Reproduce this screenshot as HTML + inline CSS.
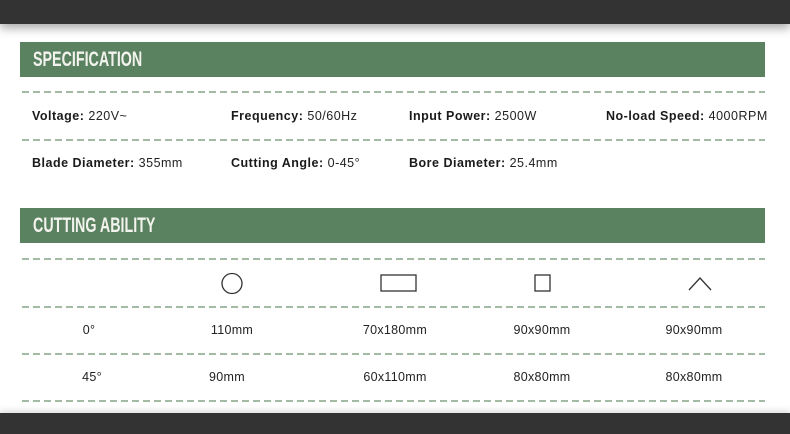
<!DOCTYPE html>
<html><head><style>
body{margin:0;width:790px;height:434px;background:#fff;position:relative;overflow:hidden;font-family:"Liberation Sans",sans-serif;}
.top{position:absolute;left:0;top:0;width:790px;height:24px;background:#333;box-shadow:0 4px 10px rgba(0,0,0,.35);}
.bot{position:absolute;left:0;top:413px;width:790px;height:21px;background:#333;box-shadow:0 -2px 6px rgba(0,0,0,.15);}
.bar{position:absolute;left:20px;width:745px;height:35px;background:#5a8160;}
.bar span{position:absolute;left:13px;top:6px;color:#f3f3ee;font-weight:bold;font-size:21px;transform:scaleX(.68);transform-origin:left;}
.dash{position:absolute;left:22px;width:743px;height:2px;background:repeating-linear-gradient(90deg,#a3bba4 0 7px,transparent 7px 11px);}
.t{position:absolute;font-size:12.5px;color:#222;white-space:nowrap;letter-spacing:0.5px;}
.t b{color:#1a1a1a}
.c{position:absolute;font-size:12.5px;color:#222;transform:translateX(-50%);white-space:nowrap;letter-spacing:0.3px;}
</style></head><body>
<div class="top"></div>
<div class="bar" style="top:42px"><span>SPECIFICATION</span></div>
<div class="dash" style="top:91px"></div>
<div class="t" style="left:32px;top:109px"><b>Voltage:</b> 220V~</div>
<div class="t" style="left:231px;top:109px"><b>Frequency:</b> 50/60Hz</div>
<div class="t" style="left:409px;top:109px"><b>Input Power:</b> 2500W</div>
<div class="t" style="left:606px;top:109px"><b>No-load Speed:</b> 4000RPM</div>
<div class="dash" style="top:139px"></div>
<div class="t" style="left:32px;top:156px"><b>Blade Diameter:</b> 355mm</div>
<div class="t" style="left:231px;top:156px"><b>Cutting Angle:</b> 0-45°</div>
<div class="t" style="left:409px;top:156px"><b>Bore Diameter:</b> 25.4mm</div>
<div class="bar" style="top:208px"><span>CUTTING ABILITY</span></div>
<div class="dash" style="top:258px"></div>
<svg style="position:absolute;left:0;top:270px" width="790" height="30">
<ellipse cx="232" cy="13.5" rx="10" ry="10" fill="none" stroke="#333" stroke-width="1.3"/>
<rect x="381" y="5" width="35" height="16" fill="none" stroke="#333" stroke-width="1.3"/>
<rect x="535" y="5" width="15" height="16" fill="none" stroke="#333" stroke-width="1.3"/>
<polyline points="689,20 700,8 711,20" fill="none" stroke="#333" stroke-width="1.3"/>
</svg>
<div class="dash" style="top:306px"></div>
<div class="c" style="left:89px;top:323px">0°</div>
<div class="c" style="left:232px;top:323px">110mm</div>
<div class="c" style="left:395px;top:323px">70x180mm</div>
<div class="c" style="left:542px;top:323px">90x90mm</div>
<div class="c" style="left:694px;top:323px">90x90mm</div>
<div class="dash" style="top:353px"></div>
<div class="c" style="left:92px;top:370px">45°</div>
<div class="c" style="left:227px;top:370px">90mm</div>
<div class="c" style="left:395px;top:370px">60x110mm</div>
<div class="c" style="left:542px;top:370px">80x80mm</div>
<div class="c" style="left:694px;top:370px">80x80mm</div>
<div class="dash" style="top:400px"></div>
<div class="bot"></div>
</body></html>
